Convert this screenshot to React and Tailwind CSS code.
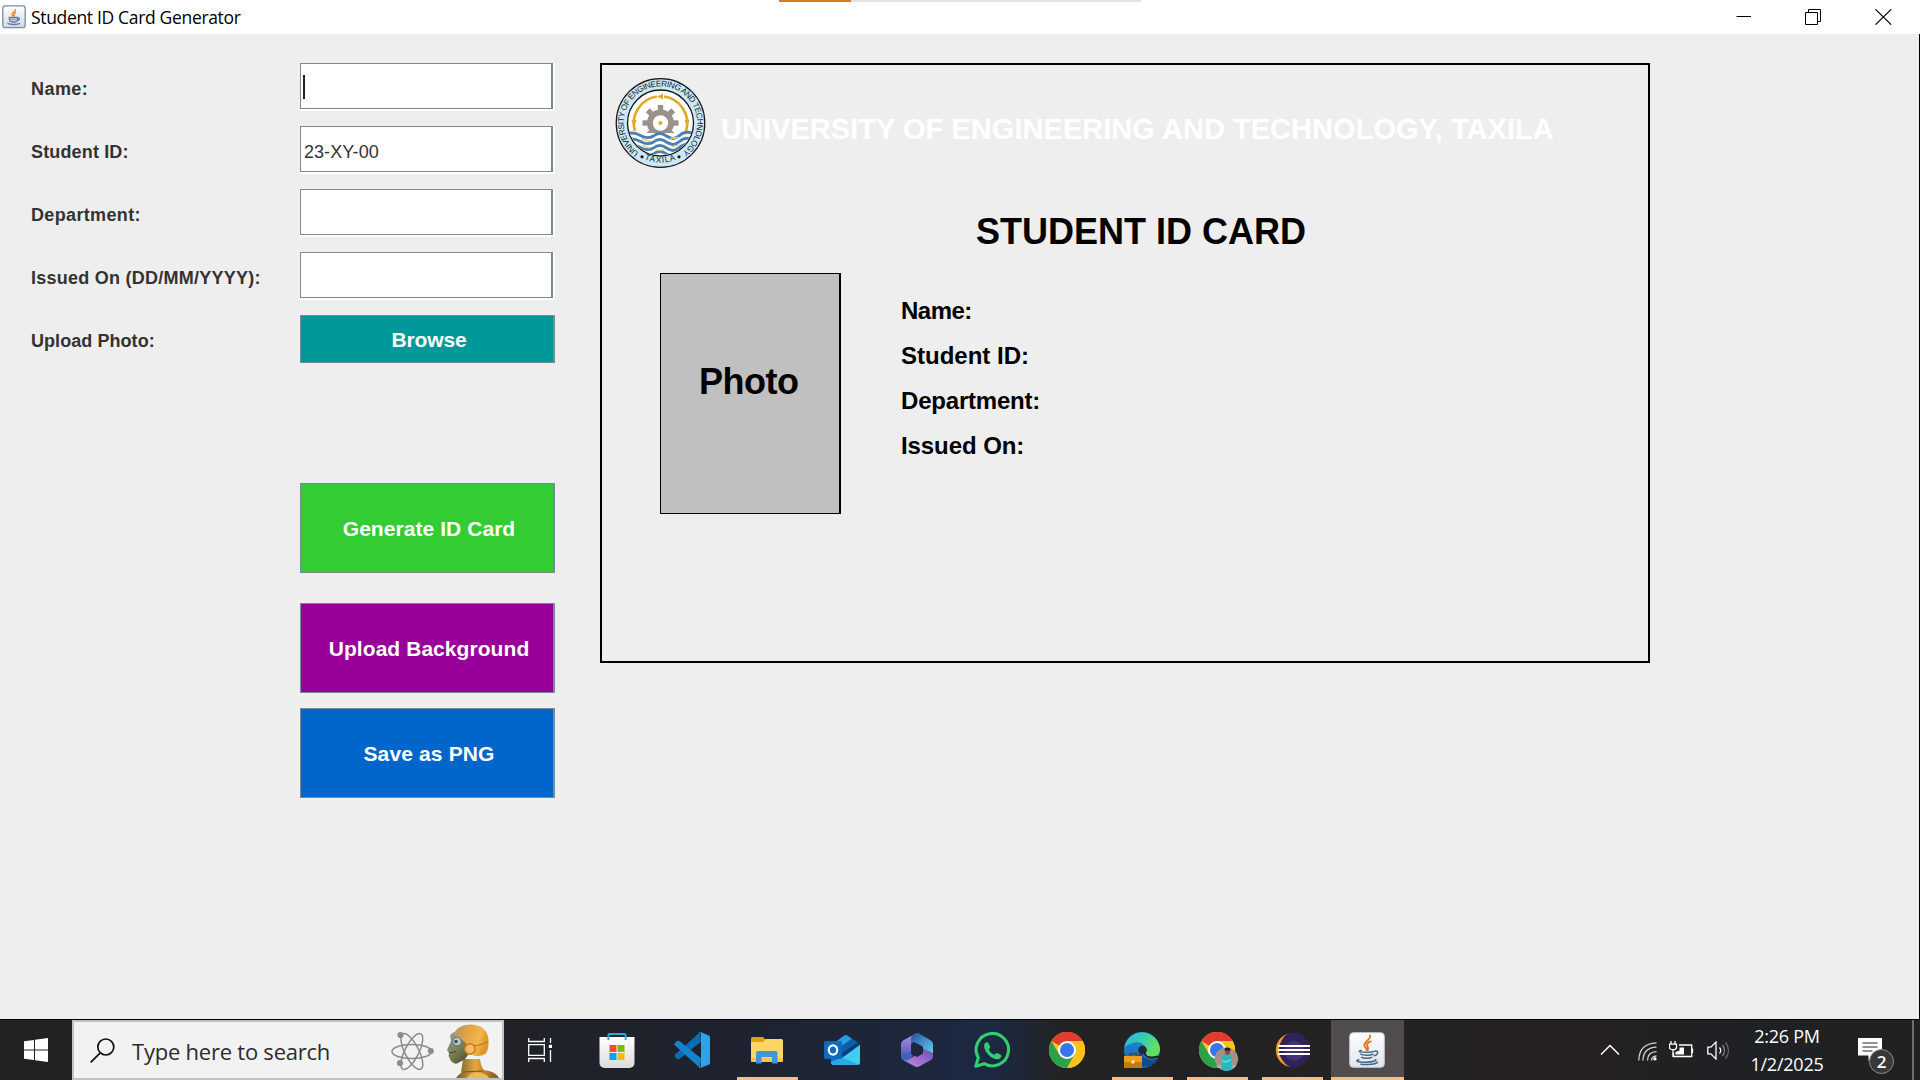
import React from "react";

const sans = "font-['Liberation_Sans',Arial,sans-serif]";
const ui = "font-['Open_Sans','Noto_Sans',sans-serif]";

function JavaIcon({ className }) {
  return (
    <svg className={className} viewBox="0 0 36 36" fill="none">
      <defs>
        <linearGradient id="javaBg" x1="0" y1="0" x2="0" y2="1">
          <stop offset="0" stopColor="#ffffff" />
          <stop offset="1" stopColor="#dfe5ea" />
        </linearGradient>
      </defs>
      <rect x="0.7" y="0.7" width="34.6" height="34.6" rx="3.5" fill="url(#javaBg)" stroke="#c3ccd4" strokeWidth="1" />
      <path d="M21 3.500c1.600 3.400-5.600 5.600-5.600 9.400 0 2.200 2 3.200 2.400 5.100M21.800 9.400c-2.300.900-4.200 2.400-3.600 4.300.500 1.500 1.500 2 .600 4.300" stroke="#e76f1c" strokeWidth="1.800" strokeLinecap="round" />
      <path d="M12.200 18.600c-5 1 1 1.800 6 1.700 4.200 0 6.300-.5 8-1.200M11.600 22.200c2.400 1.400 9.600 1.300 12.400.1M12.600 25.400c2.200 1.100 7.400 1.100 10 .1M26.500 19c3.400-.5 2.800 3.800-1.300 4.800M9.800 27.700c-7.800 2.400 10.400 3.800 16.400 1.100 1-.4 1-.8.2-1.200M12 32.300c6 .7 15.200.2 16.400-2.200" stroke="#44688a" strokeWidth="1.500" strokeLinecap="round" />
    </svg>
  );
}

function TitleIcon() {
  return (
    <svg className="h-6 w-6" viewBox="0 0 24 24" fill="none">
      <defs>
        <linearGradient id="tBg" x1="0" y1="0" x2="0" y2="1">
          <stop offset="0" stopColor="#ffffff" />
          <stop offset="1" stopColor="#cfdae4" />
        </linearGradient>
      </defs>
      <rect x="0.8" y="0.8" width="22.400" height="21.900" rx="2.500" fill="url(#tBg)" stroke="#768ea7" strokeWidth="1.300" />
      <path d="M13.500 4c.8 2.200-3.600 3.200-3.300 5.500.2 1 1 1.300 1.300 2M14 7.400c-1.600.7-2.400 1.600-1.800 2.600.3.600.3.900 0 1.500" stroke="#e8832f" strokeWidth="1.300" />
      <path d="M7.300 12.500h8.400c0 4-1 4.500-4.200 4.500s-4.200-.5-4.200-4.500zM15.700 13c2.600-.5 2.200 2.200-.5 2.400M5.500 18.300c2 1.600 10.500 1.600 12.500 0" stroke="#5f7c9a" strokeWidth="1.300" />
      <path d="M8 14.500h7" stroke="#8fa6bc" strokeWidth="1.500" />
    </svg>
  );
}

function TitleBar() {
  return (
    <header className="relative flex h-[34px] items-center bg-white">
      <div className="absolute left-[779px] top-0 flex h-[2px] w-[362px] bg-[#e3e3e3]">
        <div className="h-full w-[72px] bg-[#dc7a1e]" />
      </div>
      <div className="pl-[2px]"><TitleIcon /></div>
      <h1 className={`${ui} pl-[5px] text-[17.500px] leading-[34px] tracking-[-0.330px] whitespace-nowrap text-black`}>Student ID Card Generator</h1>
      <div className="ml-auto flex items-center pr-[28px]">
        <svg className="h-4 w-4" viewBox="0 0 16 16"><path d="M0.500 7.500h14.500" stroke="#000" strokeWidth="1" /></svg>
        <svg className="ml-[53px] h-4 w-4" viewBox="0 0 16 16" fill="none" stroke="#000" strokeWidth="1"><path d="M0.500 3.500h12v12H0.500zM3.500 3.500V0.500h12v12h-3" /></svg>
        <svg className="ml-[54px] h-4 w-[17px]" viewBox="0 0 17 16"><path d="M0.500 0.300l15.700 15.400M16.200 0.300L0.500 15.700" stroke="#000" strokeWidth="1.100" /></svg>
      </div>
    </header>
  );
}

function Field({ label, spacing, value, caret }) {
  return (
    <div className="flex h-12 items-center">
      <label className={`w-[269px] pt-[3px] text-[18px] font-bold leading-6 whitespace-nowrap text-[#333333] ${spacing}`}>{label}</label>
      <div className="h-12 w-[255px] bg-white pr-[2px] pb-[2px]">
        <div className="flex h-[46px] items-center border border-r-2 border-[#7a8a99] bg-white pl-[2px]">
          {caret && <div className="mb-[-1px] h-6 w-[2px] bg-[#222]" />}
          {value && <span className="pt-[5px] pl-px text-[18px] leading-6 tracking-[0.050px] text-[#333333]">{value}</span>}
        </div>
      </div>
    </div>
  );
}

function Button({ children, className }) {
  return (
    <button className={`flex w-[255px] items-center justify-center border border-r-2 border-[#7a8a99] pl-[4px] text-[21px] font-bold whitespace-nowrap text-white ${className}`}>
      <span className="pt-[2px] leading-6">{children}</span>
    </button>
  );
}

function Crest() {
  const teeth = [0, 45, 90, 135, 180, 225, 270, 315];
  return (
    <svg className="h-[91px] w-[91px]" viewBox="-45.500 -45 91 91">
      <defs>
        <path id="ringTop" d="M-21.600 29.730A36.750 36.750 0 1 1 21.600 29.730" />
        <path id="ringBottom" d="M-24 31.500A39.600 39.600 0 0 0 24 31.500" />
        <clipPath id="crestIn"><circle r="32.300" /></clipPath>
      </defs>
      <circle r="44.300" fill="#cde8f3" stroke="#10181c" strokeWidth="1.200" />
      <circle r="33" fill="#fff" stroke="#10181c" strokeWidth="1.300" />
      <g fill="none" stroke="#e2ab26" strokeWidth="2.700">
        <path d="M-25.600 8A27 27 0 0 1 -3.500 -26.500M3.500 -26.500A27 27 0 0 1 25.600 8" />
      </g>
      <path d="M-3.500 -26.500l6-3v6zM-26.500 4l-2.500-7h5zM26.500 4l-2.500-7h5z" fill="#e2ab26" />
      <g fill="#9b918b">
        <circle r="13.500" />
        {teeth.map((a) => (
          <rect key={a} x="-2.700" y="-18" width="5.400" height="7" transform={`rotate(${a})`} />
        ))}
      </g>
      <circle r="7.700" fill="#fff" />
      <circle r="2" fill="#e2ab26" />
      <g clipPath="url(#crestIn)">
        <rect x="-34" y="10" width="68" height="25" fill="#fff" />
        <g fill="none" stroke="#4a80b4" strokeWidth="2.900">
          <path d="M-34 11q7-2.500 14 1.500t13 .5q6-5 13 0t13-.5 15-1.500" />
          <path d="M-34 17q7-2.500 14 1.500t13 .5q6-5 13 0t13-.5 15-1.500" />
          <path d="M-34 23q7-2.500 14 1.500t13 .5q6-5 13 0t13-.5 15-1.500" />
          <path d="M-34 29q7-2.500 14 1.500t13 .5q6-5 13 0t13-.5 15-1.500" />
        </g>
        <path d="M-19 15.500l9 3M10 15.500l8-1M-18 22l7 3M11 24l8-2M-4 27h8" stroke="#ebcf83" strokeWidth="1.500" />
      </g>
      <g fill="#10181c" className={sans}>
        <text fontSize="8.200"><textPath href="#ringTop" textLength="184" lengthAdjust="spacing">UNIVERSITY OF ENGINEERING AND TECHNOLOGY</textPath></text>
        <text fontSize="8.200" textAnchor="middle"><textPath href="#ringBottom" startOffset="50%" letterSpacing="0.900">TAXILA</textPath></text>
        <circle cx="-18.500" cy="33.800" r="1.600" />
        <circle cx="18.500" cy="33.800" r="1.600" />
      </g>
    </svg>
  );
}

function IdCard() {
  return (
    <section className="flex h-[600px] w-[1050px] flex-col border-2 border-black text-black">
      <div className="flex pt-[13px] pl-[13px]">
        <Crest />
        <div className="pt-[34px] pl-[15px] text-[29px] leading-[34px] font-bold tracking-[0.040px] whitespace-nowrap text-white">UNIVERSITY OF ENGINEERING AND TECHNOLOGY, TAXILA</div>
      </div>
      <h2 className="mt-[42px] pl-[374px] text-[36px] leading-[42px] font-bold whitespace-nowrap">STUDENT ID CARD</h2>
      <div className="mt-[20px] flex pl-[58px]">
        <div className="h-[241px] w-[181px] border border-r-2 border-black bg-[#c0c0c0] pt-[87px] pl-[38px] text-[36px] leading-[42px] font-bold tracking-[-0.500px]">Photo</div>
        <div className="flex flex-col pt-[15px] pl-[60px] text-[24px] leading-[45px] font-bold whitespace-nowrap">
          <div className="tracking-[-0.500px]">Name:</div>
          <div>Student ID:</div>
          <div className="tracking-[-0.200px]">Department:</div>
          <div className="tracking-[-0.080px]">Issued On:</div>
        </div>
      </div>
    </section>
  );
}

function Slot({ children, line, active }) {
  return (
    <div className="flex h-full w-[75px] shrink-0 justify-center">
      <div className={`flex h-full flex-col items-center ${active ? "w-[73px] bg-[#504d4c]" : "w-[61px]"}`}>
        <div className="flex h-[57px] items-center justify-center pt-[3px] pr-[2px]">{children}</div>
        <div className={`h-[3px] w-full ${line ? "bg-[#fdbd80]" : ""}`} />
      </div>
    </div>
  );
}

function ChromeIcon() {
  return (
    <g>
      <circle cx="18" cy="18" r="18" fill="#fcc31e" />
      <path d="M18 18L2.410 9A18 18 0 0 1 33.590 9z" fill="#e33b2e" />
      <path d="M18 9h15.590A18 18 0 0 0 18 0z" fill="#e33b2e" />
      <path d="M2.410 9A18 18 0 0 0 18 36L25.800 22.500 10.200 22.500z" fill="#2da14a" />
      <path d="M18 36L25.800 22.500 18 9H33.590A18 18 0 0 1 18 36z" fill="#fcc31e" />
      <circle cx="18" cy="18" r="9" fill="#fff" />
      <circle cx="18" cy="18" r="7" fill="#3577e8" />
    </g>
  );
}

function StoreIcon() {
  return (
    <svg className="h-9 w-9" viewBox="0 0 36 36">
      <defs><linearGradient id="st" x1="0" y1="0" x2="0" y2="1"><stop offset="0" stopColor="#fff" /><stop offset="1" stopColor="#dcdcde" /></linearGradient></defs>
      <path d="M.5 5h35v26a5 5 0 0 1-5 5h-25a5 5 0 0 1-5-5z" fill="url(#st)" />
      <path d="M9.400 8V3.200Q9.400 1.900 10.700 1.900H25.300Q26.600 1.900 26.600 3.200V8" fill="none" stroke="#35a3d8" strokeWidth="2" />
      <path d="M10.500 13h7v7h-7z" fill="#f25022" /><path d="M18.500 13h7v7h-7z" fill="#7fba00" />
      <path d="M10.500 21h7v7h-7z" fill="#00a4ef" /><path d="M18.500 21h7v7h-7z" fill="#ffb900" />
    </svg>
  );
}

function CodeIcon() {
  return (
    <svg className="h-9 w-9" viewBox="0 0 36 36">
      <path d="M26 0L7 17.500 1.500 22a2.500 2.500 0 0 0-.2 3.500L3 27q1.300.8 2.600-.2L27 9.800z" fill="#0b6cb4" />
      <path d="M27 26.200L5.600 9.200Q4.300 8.200 3 9L1.300 10.500A2.500 2.500 0 0 0 1.500 14L26 36z" fill="#1483ce" />
      <path d="M26.500 0L35 3.400Q36 4 36 5V31q0 1-1 1.600L26.500 36Q25.500 36 25 35.300 27 36 27 33.500V2.500Q27 0 25 .7 25.500 0 26.500 0z" fill="#2ba3ee" />
    </svg>
  );
}

function FolderIcon() {
  return (
    <svg className="h-9 w-9" viewBox="0 0 36 36">
      <path d="M2 6.500Q2 5 3.500 5H14l3 3-2 5H2z" fill="#dfa018" />
      <path d="M2 10h12l3-3h15.500Q34 7 34 8.500V28.500Q34 30 32.500 30h-29Q2 30 2 28.500z" fill="#fdd467" />
      <path d="M2 26h32v2.500Q34 30 32.500 30h-29Q2 30 2 28.500z" fill="#f4c552" />
      <path d="M7 31.500V21q0-2 2-2h17.500q2 0 2 2v10.500h-5.500V25h-10.500v6.500z" fill="#3e97d6" />
    </svg>
  );
}

function OutlookIcon() {
  return (
    <svg className="h-9 w-9" viewBox="0 0 36 36">
      <path d="M7 13L20 3.600q1.500-1 3 0L35 11.500q1 .8 1 2V30q0 3-3 3H10q-3 0-3-3z" fill="#1b6fc0" />
      <path d="M9 12L21 3.400q1-.6 2 0l5 3.400L16 15z" fill="#2c9be6" />
      <path d="M16 15L28 6.800l5.500 3.700L18 21z" fill="#0d5ea8" />
      <path d="M18 21L33.500 10.500 36 12.500 18 26z" fill="#073c7c" />
      <path d="M36 13V30q0 3-3 3H10q-2 0-3-2L18 26z" fill="#41cdf2" />
      <path d="M18 25.500L36 33H10q-3-.5-3-3z" fill="#2babe4" />
      <rect x="0" y="9" width="18" height="18" rx="1.800" fill="#0f6cbd" />
      <ellipse cx="9" cy="18" rx="4.200" ry="4.700" fill="none" stroke="#fff" strokeWidth="2.200" />
    </svg>
  );
}

function OfficeIcon() {
  return (
    <svg className="h-9 w-9" viewBox="0 0 36 36">
      <defs>
        <linearGradient id="o1" x1="0" y1="0" x2="0" y2="1"><stop offset="0" stopColor="#b18fea" /><stop offset="1" stopColor="#4b4fa5" /></linearGradient>
        <linearGradient id="o2" x1="0" y1="0" x2="1" y2="1"><stop offset="0" stopColor="#2b4c9c" /><stop offset="1" stopColor="#5fd0f2" /></linearGradient>
        <linearGradient id="o3" x1="0" y1="1" x2="1" y2="0"><stop offset="0" stopColor="#c68be6" /><stop offset="1" stopColor="#6d4bb0" /></linearGradient>
      </defs>
      <path d="M17 1.500L4.500 8.300Q2 9.700 2 12.500V24q0 3 2.500 4.300L13 23.500q-1-.8-1-2.500V8z" fill="url(#o1)" />
      <path d="M16 1.500q2-1 4 0L31.500 8.300Q34 9.700 34 12.500V22L24 17.500V15L15 10q-3 1-3 3V6.500Q13 3 16 1.500z" fill="url(#o2)" />
      <path d="M34 21v3q0 3-2.500 4.300L20 34.500q-2 1-4 0L4.500 28.300 12 26l10-6q2-1 2-3.500z" fill="url(#o3)" />
      <path d="M2 22L12 20q0 2.500 2 3.700L9 28.500 4.500 28.300Q2 27 2 24z" fill="#3d62bd" />
      <path d="M18 11.500l6 3.400v6.600l-6 3.400-6-3.400v-6.600z" fill="#1d2840" />
    </svg>
  );
}

function WhatsAppIcon() {
  return (
    <svg className="h-9 w-9" viewBox="0 0 36 36">
      <path d="M1.800 34.200L4.300 25.800A16.200 16.200 0 1 1 10.200 31.700z" fill="none" stroke="#2fce70" strokeWidth="3.100" strokeLinejoin="round" />
      <path d="M10.200 12.600c.9-2.400 3.200-3 4.100-1.900l1.900 4.100c.3 1.200-1.500 2.200-1.400 3 .9 2.200 3 4 5.300 4.900 1.100.2 1.800-2 3-1.700l4 2c1 .8-.2 3.400-2.200 4.100-5.700 1.800-15.700-6.500-14.700-14.500z" fill="#2fce70" />
    </svg>
  );
}

function EdgeIcon() {
  return (
    <svg className="h-9 w-9" viewBox="0 0 36 36">
      <defs>
        <linearGradient id="e1" x1="0" y1="0" x2="1" y2="0.400"><stop offset="0" stopColor="#2bb3e6" /><stop offset="0.550" stopColor="#35cdb0" /><stop offset="1" stopColor="#66e05a" /></linearGradient>
        <linearGradient id="e2" x1="0" y1="0" x2="0" y2="1"><stop offset="0" stopColor="#1f8fd4" /><stop offset="1" stopColor="#1468b6" /></linearGradient>
      </defs>
      <circle cx="18" cy="18" r="18" fill="url(#e2)" />
      <path d="M12 26Q14 36 26 34A18 18 0 0 0 34 26Q28 29.500 22 26.500 17 23.500 17 19z" fill="#124a8e" />
      <path d="M36 27L32.500 25.500Q27 28 22.500 25 17 21 20.500 18.500 23 24.500 30 24l6 0z" fill="#242222" />
      <path d="M.3 15.500A18 18 0 0 1 36 17Q36 24.500 28 24.500 20.500 24.500 22.200 19.500 23.500 17.500 20.500 13.500 16.500 9 10 10.500 3.500 12 .3 15.500z" fill="url(#e1)" />
      <circle cx="18.500" cy="18" r="4.300" fill="#202b36" />
      <path d="M6 25V21.800h6.500V25" fill="none" stroke="#6b3c0c" strokeWidth="1.500" />
      <path d="M0 24h18v12H0z" fill="#c8790c" /><path d="M0 24h18v6H0z" fill="#eb9f1d" />
      <rect x="7.500" y="28.500" width="2.800" height="3" fill="#fff2a3" />
    </svg>
  );
}

function ChromeProfileIcon() {
  return (
    <svg className="h-10 w-10" viewBox="0 0 40 40">
      <defs><clipPath id="av"><circle cx="27.500" cy="27" r="11.600" /></clipPath></defs>
      <ChromeIcon />
      <g clipPath="url(#av)">
        <rect x="14" y="14" width="26" height="26" fill="#a88e88" />
        <path d="M15 33h25v8H15z" fill="#c2aba3" />
        <path d="M22 39l.5-9q-1-5 3-7.500h4.500Q33.500 24 33 29L34 39z" fill="#27b9bd" />
        <path d="M23 28.500q4 3 9-1" stroke="#74dcdc" strokeWidth="1.500" fill="none" />
        <ellipse cx="28.500" cy="19.500" rx="2.500" ry="3.300" fill="#7a5145" />
        <path d="M25.500 18.500q0-3.500 3-3.500t3 3.500z" fill="#241c1e" />
      </g>
    </svg>
  );
}

function EclipseIcon() {
  return (
    <svg className="h-9 w-9" viewBox="0 0 36 36">
      <path d="M16.500.900A17.300 17.300 0 0 0 16.500 35.100 22 22 0 0 1 16.500.900z" fill="#f59a2c" />
      <circle cx="20.500" cy="18" r="15.500" fill="#2d2259" />
      <path d="M13.500 1.500A17 17 0 0 1 31 6 17 17 0 0 1 31 31 17 17 0 0 1 14 34 20 20 0 0 1 13.500 1.500z" fill="#2e2358" />
      <circle cx="20" cy="19" r="10" fill="#453276" />
      <path d="M4 14h32M4 18h32M4 22h32" stroke="#fff" strokeWidth="1.900" />
    </svg>
  );
}

function SearchArt() {
  return (
    <svg className="ml-auto h-14 w-[113px] shrink-0 self-end" viewBox="0 0 113 56" fill="none">
      <defs>
        <linearGradient id="head" x1="0" y1="0" x2="1" y2="0.300"><stop offset="0" stopColor="#a39a6b" /><stop offset="0.450" stopColor="#e2a444" /><stop offset="0.800" stopColor="#f2b54d" /><stop offset="1" stopColor="#e0962a" /></linearGradient>
        <linearGradient id="face" x1="0" y1="0" x2="0.800" y2="1"><stop offset="0" stopColor="#8fa3a4" /><stop offset="0.500" stopColor="#7d8159" /><stop offset="1" stopColor="#4b4a26" /></linearGradient>
        <linearGradient id="neck" x1="0" y1="0" x2="1" y2="0"><stop offset="0" stopColor="#6e5c28" /><stop offset="0.450" stopColor="#e5a73f" /><stop offset="1" stopColor="#7d5413" /></linearGradient>
      </defs>
      <g stroke="#8b8b8b" strokeWidth="1.500">
        <ellipse cx="22.800" cy="29.500" rx="19.800" ry="7" />
        <ellipse cx="22.800" cy="29.500" rx="19.800" ry="7" transform="rotate(63 22.800 29.500)" />
        <ellipse cx="22.800" cy="29.500" rx="19.800" ry="7" transform="rotate(117 22.800 29.500)" />
      </g>
      <g fill="#8c8d84"><circle cx="11.500" cy="13" r="3.100" /><circle cx="41.800" cy="29" r="3" /><circle cx="11" cy="41" r="3.100" /></g>
      <path d="M67 56q2-3 5-5l2-14h17q1 8 4 11 11 1 15 8z" fill="url(#neck)" />
      <path d="M74 50l20-1" stroke="#77551c" strokeWidth="1.200" />
      <path d="M78 56q3-5 10-5.500 9 0 12 5.500z" fill="#f0b856" />
      <path d="M65 10l-4 3 1 6-4 9 2 3-.5 3 2.500 5q4 4 7 2l7-4 8-11-7-16z" fill="url(#face)" />
      <path d="M64 13Q68 2.500 81 2.500q17 .5 18.500 15 .5 9-2.500 14-6 4-13 2-2-9-7-12-4-5-13-8.500z" fill="url(#head)" />
      <circle cx="68" cy="19.500" r="4.300" fill="#bac8cb" stroke="#66706e" /><circle cx="67" cy="19.500" r="1.800" fill="#3f5258" />
      <path d="M60 31l7-1.500" stroke="#3d422c" />
      <circle cx="81" cy="27" r="5.200" fill="#f3bd6a" stroke="#d07f1e" strokeWidth="1.800" />
      <path d="M85 24q7-1 14-4" stroke="#b67317" strokeWidth="1" />
    </svg>
  );
}

function Taskbar() {
  return (
    <footer className="flex h-[60px] w-full bg-[linear-gradient(90deg,#222222_0px,#202227_500px,#1e232f_750px,#1c2943_990px,#232323_1060px,#242120_1600px,#1e2125_1760px,#222120_1920px)]">
      <div className="flex w-[72px] items-center justify-center">
        <svg className="h-6 w-6" viewBox="0 0 24 24" fill="#fff"><path d="M0 3.300L10 2v9.500H0zM11 1.800L24 0v11.500H11zM0 12.500h10V22L0 20.700zM11 12.500h13V24l-13-1.800z" /></svg>
      </div>
      <div className="flex w-[432px] items-center overflow-hidden border-2 border-[#c2c2c2] bg-[#f2f2f2]">
        <svg className="ml-4 h-[25px] w-[25px] shrink-0" viewBox="0 0 25 25" fill="none" stroke="#111" strokeWidth="1.700"><circle cx="15.800" cy="9" r="8" /><path d="M10.200 14.800L.7 24.300" /></svg>
        <span className={`${ui} ml-[17px] pt-[3px] text-[22px] leading-[53px] tracking-[-0.230px] whitespace-nowrap text-[#2b2b2b]`}>Type here to search</span>
        <SearchArt />
      </div>
      <div className="flex w-[76px] items-center pl-6">
        <svg className="h-6 w-6" viewBox="0 0 24 24" fill="none" stroke="#fff" strokeWidth="1.300"><path d="M.7 0v3.500h15.600V0M.7 24v-3.500h15.600V24M.7 6.700h15.600v10.600H.7zM22.500 0v5M22.500 12v12" /><path d="M20.800 6.800h3.200v3.200h-3.200z" fill="#fff" stroke="none" /></svg>
      </div>
      <Slot><StoreIcon /></Slot>
      <Slot><CodeIcon /></Slot>
      <Slot line><FolderIcon /></Slot>
      <Slot><OutlookIcon /></Slot>
      <Slot><OfficeIcon /></Slot>
      <Slot><WhatsAppIcon /></Slot>
      <Slot><svg className="h-9 w-9" viewBox="0 0 36 36"><ChromeIcon /></svg></Slot>
      <Slot line><EdgeIcon /></Slot>
      <Slot line><div className="-mb-1 ml-1"><ChromeProfileIcon /></div></Slot>
      <Slot line><EclipseIcon /></Slot>
      <Slot line active><JavaIcon className="h-9 w-9" /></Slot>
      <div className="ml-auto flex h-full items-center text-white">
        <svg className="h-3 w-5" viewBox="0 0 20 12" fill="none" stroke="#fff" strokeWidth="1.500"><path d="M1 10.500l9-9 9 9" /></svg>
        <svg className="mt-[2px] ml-[18px] h-[19px] w-[19px]" viewBox="0 0 19 19" fill="none" strokeWidth="1.300">
          <path d="M.8 18.500Q1 1.500 18.500.8M5 18.500Q5.200 5.800 18.500 5.200M9.500 18.500Q9.600 9.900 18.500 9.700M13.600 18.500Q13 14.500 18.500 14" stroke="#d0d0d0" /><circle cx="16.900" cy="16.900" r="1.700" fill="#fff" />
        </svg>
        <svg className="ml-[12px] h-[18px] w-[25px]" viewBox="0 0 25 18" fill="none" stroke="#fff" strokeWidth="1.300">
          <path d="M10 4h12.700v11.500H4.500V12M23.500 7.500v4.500" /><path d="M10.500 6.500H15v7H6.500v-2.500l4-1.500z" fill="#fff" stroke="none" /><path d="M2 0v3M6 0v3M.5 3.200h7v3q0 2.500-3.500 2.500T.5 6.200zM4 9v7" />
        </svg>
        <svg className="ml-[13px] h-[19px] w-[23px]" viewBox="0 0 23 19" fill="none" stroke="#fff" strokeWidth="1.300">
          <path d="M.8 6.200h3L9 1v17l-5.200-5.200h-3z" /><path d="M12.500 6.500q2.500 3 0 6" /><path d="M15.500 4q4 5.500 0 11" stroke="#8a8a8a" /><path d="M18.500 1.500q6 8 0 16" stroke="#666" />
        </svg>
        <div className={`${ui} ml-[14px] flex w-[86px] flex-col items-center text-[18px] leading-7 tracking-[-0.230px] whitespace-nowrap`}>
          <span>2:26 PM</span>
          <span>1/2/2025</span>
        </div>
        <div className="relative ml-[28px] h-[24px] w-[54px]">
          <svg className="h-6 w-6" viewBox="0 0 24 24"><path d="M0 0h24v17.500H14.500L10.500 23V17.500H0z" fill="#fff" /><path d="M4.500 5h15M4.500 9h15M4.500 13h10" stroke="#222" strokeWidth="1.200" /></svg>
          <div className={`${ui} absolute left-[11px] top-[11px] flex h-[25px] w-[25px] items-center justify-center rounded-full border border-[#8a8a8a] bg-[#383838] text-[17px] leading-none font-semibold`}>2</div>
        </div>
        <div className="h-full w-[2px] bg-[#6d6d6d]" />
        <div className="w-[6px]" />
      </div>
    </footer>
  );
}

export default function App() {
  return (
    <div className={`flex h-[1080px] w-[1920px] flex-col overflow-hidden bg-[#eeeeee] ${sans}`}>
      <TitleBar />
      <main className="flex flex-1 border-r border-b border-black pt-[29px] pl-[31px]">
        <form className="flex w-[569px] flex-col" autoComplete="off">
          <div className="flex flex-col gap-[15px]">
            <Field label="Name:" spacing="tracking-[0.450px]" caret />
            <Field label="Student ID:" spacing="tracking-[0.150px]" value="23-XY-00" />
            <Field label="Department:" spacing="tracking-[0.350px]" />
            <Field label="Issued On (DD/MM/YYYY):" spacing="tracking-[0.250px]" />
            <div className="flex h-12 items-center">
              <div className="w-[269px] pt-[3px] text-[18px] leading-6 font-bold tracking-[0.060px] text-[#333333]">Upload Photo:</div>
              <Button className="h-12 bg-[#009999] tracking-[-0.150px]">Browse</Button>
            </div>
          </div>
          <div className="flex flex-col pt-[120px] pl-[269px]">
            <Button className="h-[90px] bg-[#33cc33] tracking-[0.060px]">Generate ID Card</Button>
            <Button className="mt-[30px] h-[90px] bg-[#990099] tracking-[0.060px]">Upload Background</Button>
            <Button className="mt-[15px] h-[90px] bg-[#0066cc] tracking-[0.140px]">Save as PNG</Button>
          </div>
        </form>
        <IdCard />
      </main>
      <Taskbar />
    </div>
  );
}
